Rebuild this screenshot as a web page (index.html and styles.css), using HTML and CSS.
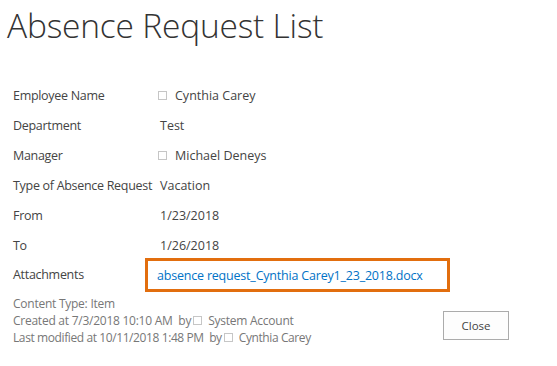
FILE: index.html
```html
<!DOCTYPE html>
<html lang="en">
<head>
    <meta charset="UTF-8">
    <meta name="viewport" content="width=device-width, initial-scale=1.0">
    <title>Absence Request List</title>
    <link rel="stylesheet" href="styles.css">
</head>
<body>
    <div id="page">
        <h1 class="title">Absence Request List</h1>

        <table class="fields">
            <tr>
                <td class="label">Employee Name</td>
                <td class="value"><span class="presence"></span>Cynthia Carey</td>
            </tr>
            <tr>
                <td class="label">Department</td>
                <td class="value">Test</td>
            </tr>
            <tr>
                <td class="label">Manager</td>
                <td class="value"><span class="presence"></span>Michael Deneys</td>
            </tr>
            <tr>
                <td class="label">Type of Absence Request</td>
                <td class="value">Vacation</td>
            </tr>
            <tr>
                <td class="label">From</td>
                <td class="value">1/23/2018</td>
            </tr>
            <tr>
                <td class="label">To</td>
                <td class="value">1/26/2018</td>
            </tr>
            <tr class="attach-row">
                <td class="label">Attachments</td>
                <td class="value">
                    <div class="attach"><a href="#">absence request_Cynthia Carey1_23_2018.docx</a></div>
                </td>
            </tr>
        </table>

        <div class="footer">
            <div class="info">
                <div>Content Type: Item</div>
                <div>Created at 7/3/2018 10:10 AM &nbsp;by<span class="presence small"></span>System Account</div>
                <div>Last modified at 10/11/2018 1:48 PM &nbsp;by<span class="presence small"></span>Cynthia Carey</div>
            </div>
            <button class="close-btn" type="button">Close</button>
        </div>
    </div>
</body>
</html>
```

FILE: styles.css
```css
body {
    margin: 0;
    background: #fff;
    font-family: "Open Sans", "Noto Sans", sans-serif;
    color: #444;
}
#page {
    width: 557px;
    padding: 0 0 0 7px;
    box-sizing: border-box;
}
.title {
    margin: 0;
    padding-top: 2px;
    font-size: 33.5px;
    font-weight: 300;
    color: #333;
    line-height: 46px;
    letter-spacing: -0.2px;
}

/* fields */
.fields {
    margin-top: 32px;
    margin-left: 4px;
    border-collapse: collapse;
    font-size: 12.5px;
}
.fields td {
    padding: 0;
    height: 30px;
    vertical-align: middle;
}
.fields .label {
    width: 144px;
    padding-left: 2px;
    white-space: nowrap;
    letter-spacing: -0.3px;
}
.fields .value {
    padding-left: 3px;
}
.fields .attach-row td {
    height: 32px;
}
.fields .attach-row .label {
    vertical-align: top;
    padding-top: 6px;
    height: 26px;
    box-sizing: border-box;
}
.presence {
    display: inline-block;
    width: 7px;
    height: 7px;
    border: 1px solid #c6c6c6;
    margin-right: 8px;
    margin-left: -2px;
    vertical-align: 0;
}
.presence.small {
    margin: 0 6px 0 2px;
}

.attach {
    width: 290px;
    height: 28px;
    margin-left: -15px;
    margin-top: -2px;
    border: 3px solid #e26e0e;
    box-sizing: content-box;
    display: flex;
    align-items: center;
    padding-left: 9px;
}
.attach a {
    color: #0072c6;
    text-decoration: none;
    letter-spacing: -0.2px;
}

/* footer */
.footer {
    display: flex;
    align-items: flex-start;
    margin-top: 3px;
    padding-left: 6px;
}
.info {
    font-size: 12px;
    color: #777;
    line-height: 17px;
    flex: 1;
    letter-spacing: -0.25px;
}
.info div:last-child {
    letter-spacing: -0.4px;
}
.close-btn {
    margin: 16px 48px 0 0;
    width: 66px;
    height: 29px;
    border: 1px solid #ababab;
    background: #fdfdfd;
    font-family: inherit;
    font-size: 11.5px;
    color: #444;
}
```
